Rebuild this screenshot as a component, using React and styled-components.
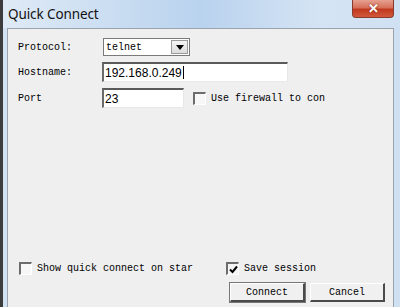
import React from "react";
import styled, { createGlobalStyle } from "styled-components";

const Global = createGlobalStyle`
  html, body { margin: 0; padding: 0; background: #3a3a3a; }
  #root { width: 400px; height: 307px; }
`;

const Window = styled.div`
  width: 400px;
  height: 307px;
  box-sizing: border-box;
  border-left: 3px solid #3c3c3c;
  background: linear-gradient(90deg, #d3e2f2 0%, #c5daf0 40%, #d7e6f5 70%, #cfe0f2 100%);
  display: flex;
  flex-direction: column;
  overflow: hidden;
`;

const TitleBar = styled.div`
  height: 28px;
  flex: none;
  display: flex;
  justify-content: space-between;
  align-items: flex-start;
  padding: 0 6px 0 5px;
  background: linear-gradient(90deg, #dfeaf6 0%, #c8dcf1 30%, #b9d2ee 50%, #d5e4f4 80%, #cfe0f2 100%);
`;

const Title = styled.span`
  font-family: "Noto Sans", "Liberation Sans", sans-serif;
  font-size: 13.5px;
  color: #111;
  line-height: 28px;
  padding-top: 0px;
  letter-spacing: -0.1px;
`;

const CloseButton = styled.div`
  width: 42px;
  height: 18px;
  box-sizing: border-box;
  border: 1px solid #8a3a2a;
  border-top: none;
  border-radius: 0 0 4px 4px;
  background: linear-gradient(180deg, #e6a190 0%, #d6705a 45%, #c1391f 55%, #d0583c 100%);
  display: flex;
  align-items: center;
  justify-content: center;
  color: #fff;
  font-family: "Liberation Sans", sans-serif;
  font-weight: bold;
  font-size: 13px;
  text-shadow: 0 0 2px #7a1d10;
`;

const Body = styled.div`
  flex: 1;
  margin: 0 6px 0 4px;
  background: #efeff0;
  border-left: 1px solid #9aa3ad;
  border-top: 1px solid #9aa3ad;
  border-right: 1px solid #9aa3ad;
  display: flex;
  flex-direction: column;
  padding: 9px 0 5px 0;
  font-family: "Liberation Mono", monospace;
  font-size: 10px;
  color: #000;
`;

const Form = styled.div`
  display: grid;
  grid-template-columns: 84px auto;
  grid-template-rows: 18px 20px 20px;
  row-gap: 6px;
  padding-left: 10px;
  align-items: center;
`;

const Label = styled.span`
  font-family: "Liberation Mono", monospace;
  font-size: 10px;
  white-space: nowrap;
`;

const Select = styled.div`
  width: 87px;
  height: 18px;
  margin-left: 1px;
  box-sizing: border-box;
  border: 1px solid #7a7a7a;
  background: #fff;
  display: flex;
  align-items: center;
  justify-content: space-between;
  padding-left: 2px;
`;

const DropButton = styled.div`
  width: 17px;
  height: 14px;
  margin-right: 1px;
  box-sizing: border-box;
  border: 1px solid #9a9a9a;
  background: linear-gradient(#f4f4f4, #dcdcdc);
  display: flex;
  align-items: center;
  justify-content: center;
`;

const Sunken = styled.div`
  width: ${(p) => p.$w}px;
  height: 20px;
  box-sizing: border-box;
  border-top: 2px solid #5a5a5a;
  border-left: 2px solid #6a6a6a;
  border-bottom: 1px solid #e8e8e8;
  border-right: 1px solid #e8e8e8;
  background: #fff;
  display: flex;
  align-items: center;
  padding-left: 1px;
  font-family: "Liberation Sans", sans-serif;
  font-size: 12px;
`;

const Caret = styled.span`
  display: inline-block;
  width: 1px;
  height: 13px;
  background: #000;
  margin-left: 1px;
`;

const PortRow = styled.div`
  display: flex;
  align-items: center;
`;

const Check = styled.span`
  width: 13px;
  height: 13px;
  box-sizing: border-box;
  border-top: 2px solid #6c6c6c;
  border-left: 2px solid #6c6c6c;
  border-bottom: 1px solid #ffffff;
  border-right: 1px solid #ffffff;
  background: ${(p) => (p.$checked ? "#f4f4f4" : "#f7f7f7")};
  display: inline-flex;
  align-items: center;
  justify-content: center;
  flex: none;
`;

const CheckItem = styled.label`
  display: flex;
  align-items: center;
  gap: 5px;
  margin-left: ${(p) => p.$ml || 0}px;
  white-space: nowrap;
`;

const Bottom = styled.div`
  margin-top: auto;
  display: flex;
  flex-direction: column;
  gap: 8px;
`;

const Options = styled.div`
  display: grid;
  grid-template-columns: 207px auto;
  padding-left: 11px;
  height: 13px;
  align-items: center;
`;

const Buttons = styled.div`
  display: flex;
  justify-content: flex-end;
  gap: 5px;
  padding-right: 8px;
`;

const Button = styled.div`
  width: 75px;
  height: 19px;
  box-sizing: border-box;
  border-top: 1px solid #ffffff;
  border-left: 1px solid #ffffff;
  border-right: 2px solid #4a4a4a;
  border-bottom: 2px solid #4a4a4a;
  outline: ${(p) => (p.$default ? "1px solid #777" : "none")};
  background: #f0f0f0;
  display: flex;
  align-items: center;
  justify-content: center;
  font-family: "Liberation Mono", monospace;
  font-size: 10px;
`;

function CheckBox({ checked }) {
  return (
    <Check $checked={checked}>
      {checked && (
        <svg width="9" height="9" viewBox="0 0 9 9">
          <path d="M1 4.5 L3.5 7 L8 1.5" stroke="#000" strokeWidth="2" fill="none" />
        </svg>
      )}
    </Check>
  );
}

export default function App() {
  return (
    <>
      <Global />
      <Window>
        <TitleBar>
          <Title>Quick Connect</Title>
          <CloseButton>✕</CloseButton>
        </TitleBar>
        <Body>
          <Form>
            <Label>Protocol:</Label>
            <Select>
              <Label>telnet</Label>
              <DropButton>
                <svg width="8" height="5" viewBox="0 0 8 5">
                  <path d="M0 0 H8 L4 5 Z" fill="#000" />
                </svg>
              </DropButton>
            </Select>
            <Label>Hostname:</Label>
            <Sunken $w={186}>
              192.168.0.249
              <Caret />
            </Sunken>
            <Label>Port</Label>
            <PortRow>
              <Sunken $w={82}>23</Sunken>
              <CheckItem $ml={9}>
                <CheckBox />
                <Label>Use firewall to con</Label>
              </CheckItem>
            </PortRow>
          </Form>
          <Bottom>
            <Options>
              <CheckItem>
                <CheckBox />
                <Label>Show quick connect on star</Label>
              </CheckItem>
              <CheckItem>
                <CheckBox checked />
                <Label>Save session</Label>
              </CheckItem>
            </Options>
            <Buttons>
              <Button $default>Connect</Button>
              <Button>Cancel</Button>
            </Buttons>
          </Bottom>
        </Body>
      </Window>
    </>
  );
}
